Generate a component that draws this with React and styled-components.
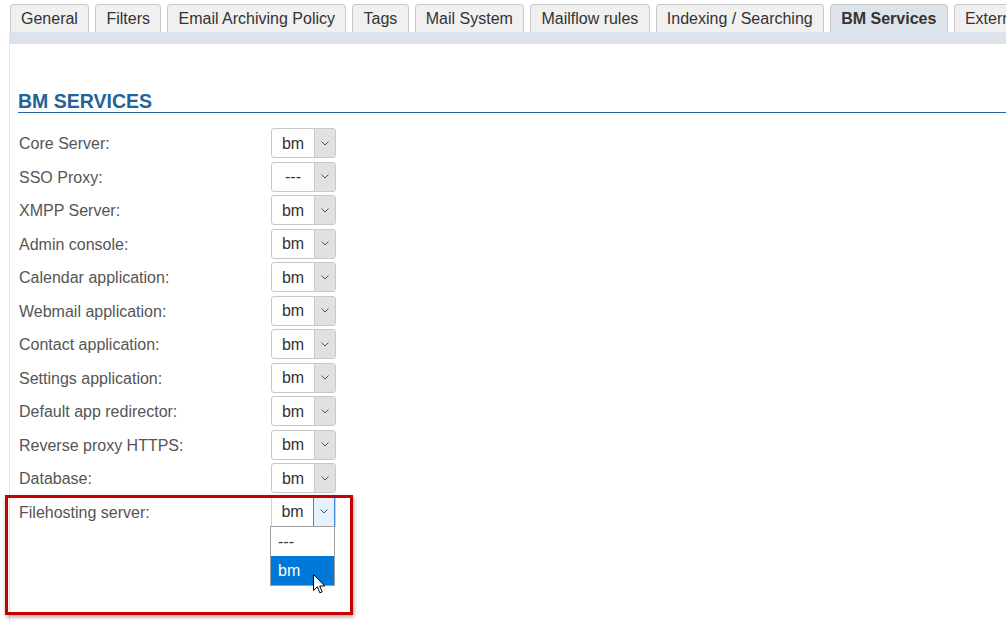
import React from "react";
import styled, { createGlobalStyle } from "styled-components";

const tabs = [
  "General",
  "Filters",
  "Email Archiving Policy",
  "Tags",
  "Mail System",
  "Mailflow rules",
  "Indexing / Searching",
  "BM Services",
  "External Security",
];

const services = [
  { label: "Core Server:", value: "bm" },
  { label: "SSO Proxy:", value: "---" },
  { label: "XMPP Server:", value: "bm" },
  { label: "Admin console:", value: "bm" },
  { label: "Calendar application:", value: "bm" },
  { label: "Webmail application:", value: "bm" },
  { label: "Contact application:", value: "bm" },
  { label: "Settings application:", value: "bm" },
  { label: "Default app redirector:", value: "bm" },
  { label: "Reverse proxy HTTPS:", value: "bm" },
  { label: "Database:", value: "bm" },
  { label: "Filehosting server:", value: "bm", open: true },
];

function Chevron() {
  return (
    <svg width="8" height="5" viewBox="0 0 8 5">
      <path d="M0.5 0.5 L4 4 L7.5 0.5" fill="none" stroke="#555" strokeWidth="1" />
    </svg>
  );
}

function Cursor() {
  return (
    <svg width="13" height="21" viewBox="0 0 13 21">
      <path
        d="M0.5 0.5 L0.5 16.5 L4.3 12.8 L6.8 18.8 L9.2 17.8 L6.7 12 L11.8 12 Z"
        fill="#fff"
        stroke="#000"
        strokeWidth="1"
        strokeLinejoin="round"
      />
    </svg>
  );
}

function Select({ value, open }) {
  return (
    <SelectWrap>
      <SelectBox open={open}>
        <SelectValue>{value}</SelectValue>
        <SelectArrow open={open}>
          <Chevron />
        </SelectArrow>
      </SelectBox>
      {open && (
        <OptionList>
          <Option>---</Option>
          <Option selected>bm</Option>
          <CursorSpot>
            <Cursor />
          </CursorSpot>
        </OptionList>
      )}
    </SelectWrap>
  );
}

function App() {
  return (
    <>
      <GlobalStyle />
      <Page>
        <TabBar>
          {tabs.map((t) => (
            <Tab key={t} active={t === "BM Services"}>
              {t}
            </Tab>
          ))}
        </TabBar>
        <Panel>
          <Strip />
          <Content>
            <Heading>BM SERVICES</Heading>
            <Form>
              {services.map((s) => (
                <React.Fragment key={s.label}>
                  <Label>{s.label}</Label>
                  <Select value={s.value} open={s.open} />
                </React.Fragment>
              ))}
              <Highlight />
            </Form>
          </Content>
        </Panel>
      </Page>
    </>
  );
}

const GlobalStyle = createGlobalStyle`
  html, body {
    margin: 0;
    padding: 0;
    background: #fff;
    overflow: hidden;
  }
  body {
    font-family: "Liberation Sans", Arial, sans-serif;
    font-size: 16px;
    color: #333;
  }
`;

const Page = styled.div`
  width: 1006px;
  height: 623px;
  overflow: hidden;
`;

const TabBar = styled.div`
  display: flex;
  gap: 6px;
  padding: 4px 0 0 10px;
  white-space: nowrap;
`;

const Tab = styled.div`
  flex: none;
  height: 27px;
  line-height: 27px;
  padding: 0 10.5px 0 10px;
  border: 1px solid #c8c8c8;
  border-bottom: none;
  border-radius: 4px 4px 0 0;
  background: ${(p) => (p.active ? "#dce3ea" : "#f0f0f0")};
  font-weight: ${(p) => (p.active ? "bold" : "normal")};
  color: #333;
`;

const Panel = styled.div`
  margin-left: 9px;
  border-left: 1px solid #e2e7ec;
  min-height: 600px;
`;

const Strip = styled.div`
  height: 12px;
  background: #dce3ea;
`;

const Content = styled.div`
  padding: 46px 0 0 8px;
`;

const Heading = styled.h2`
  margin: 0;
  font-size: 19.5px;
  line-height: 22px;
  font-weight: bold;
  color: #256396;
  border-bottom: 1px solid #256396;
`;

const Form = styled.div`
  position: relative;
  display: grid;
  grid-template-columns: 253px 65px;
  grid-auto-rows: 30px;
  row-gap: 3.5px;
  margin-top: 15px;
`;

const Label = styled.div`
  display: flex;
  align-items: center;
  padding: 2px 0 0 1px;
  color: #555;
  font-size: 16px;
`;

const SelectWrap = styled.div`
  position: relative;
`;

const SelectBox = styled.div`
  display: flex;
  height: 30px;
  box-sizing: border-box;
  border: 1px solid ${(p) => (p.open ? "#d0d0d0" : "#c8c8c8")};
  border-radius: ${(p) => (p.open ? "0" : "3px")};
  background: #fff;
  overflow: hidden;
`;

const SelectValue = styled.div`
  flex: 1;
  display: flex;
  align-items: center;
  justify-content: center;
  padding-top: 1px;
  color: #333;
  font-size: 16px;
`;

const SelectArrow = styled.div`
  width: 20px;
  display: flex;
  align-items: center;
  justify-content: center;
  background: ${(p) => (p.open ? "#e5f1fb" : "#e1e1e1")};
  border-left: 1px solid ${(p) => (p.open ? "#3c8fd6" : "#c8c8c8")};
  border-right: ${(p) => (p.open ? "1px solid #3c8fd6" : "none")};
`;

const OptionList = styled.div`
  position: absolute;
  top: 29px;
  left: -1px;
  width: 65px;
  box-sizing: border-box;
  border: 1px solid #a0a0a0;
  background: #fff;
  z-index: 2;
`;

const Option = styled.div`
  height: 29px;
  line-height: 29px;
  padding-left: 7px;
  font-size: 16px;
  color: ${(p) => (p.selected ? "#fff" : "#333")};
  background: ${(p) => (p.selected ? "#0078d7" : "#fff")};
`;

const CursorSpot = styled.div`
  position: absolute;
  left: 42px;
  top: 47px;
  line-height: 0;
`;

const Highlight = styled.div`
  position: absolute;
  left: -13px;
  top: 367px;
  width: 348px;
  height: 120px;
  box-sizing: border-box;
  border: 3px solid #c80000;
  box-shadow: 1px 2px 4px rgba(0, 0, 0, 0.35);
  pointer-events: none;
  z-index: 1;
`;

export default App;
